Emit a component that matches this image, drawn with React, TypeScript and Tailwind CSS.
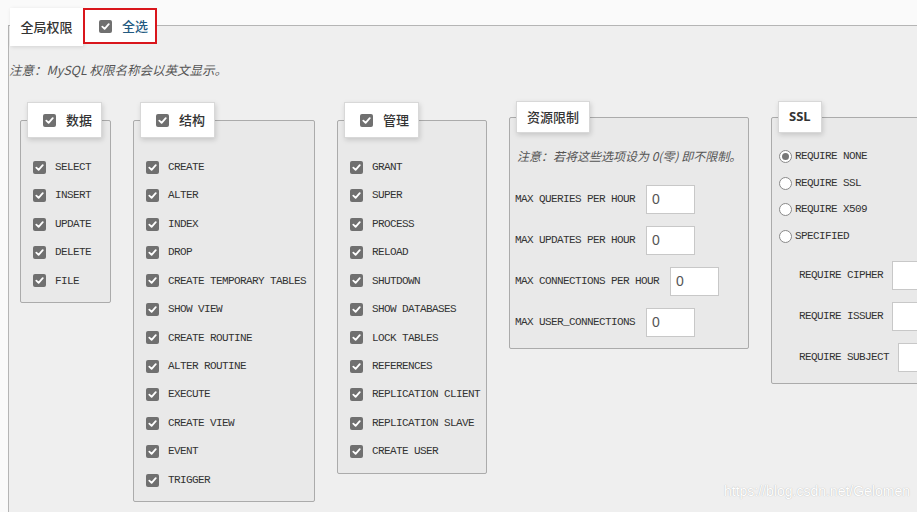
import React from 'react';

const mono = "font-['Liberation_Mono','DejaVu_Sans_Mono',monospace] text-[11px] tracking-[-0.6px] text-[#333]";
const cjk = "font-['Noto_Sans_CJK_SC','Noto_Sans',sans-serif]";

function Check() {
  return (
    <span className="inline-flex h-[13px] w-[13px] shrink-0 items-center justify-center rounded-[2px] bg-[#707070]">
      <svg width="9" height="9" viewBox="0 0 10 10" fill="none">
        <path d="M1.5 5.2 L4 7.6 L8.6 2.4" stroke="#fff" strokeWidth="2" strokeLinecap="round" strokeLinejoin="round" />
      </svg>
    </span>
  );
}

function Radio({ on = false }: { on?: boolean }) {
  return (
    <span className="inline-flex h-[13px] w-[13px] shrink-0 items-center justify-center rounded-full border border-[#8a8a8a] bg-white">
      {on && <span className="h-[7px] w-[7px] rounded-full bg-[#777]" />}
    </span>
  );
}

function Legend({ children, check = false, h = 'h-[36px]' }: { children: React.ReactNode; check?: boolean; h?: string }) {
  return (
    <legend className="ml-[6px]">
      <div className={`flex ${h} items-center bg-white border border-[#d8d8d8] shadow-[1px_2px_5px_rgba(0,0,0,0.15)] ${check ? 'pl-[15px] pr-[9px] gap-[10px]' : 'px-[10px]'}`}>
        {check && <Check />}
        {children}
      </div>
    </legend>
  );
}

function Group({ title, items, width }: { title: string; items: string[]; width: string }) {
  return (
    <fieldset className={`${width} shrink-0 rounded-[2px] border border-[#ababab] bg-[#e9e9e9] mt-[1px]`}>
      <Legend check>
        <span className={`${cjk} text-[13px] font-medium text-[#333]`}>{title}</span>
      </Legend>
      <div className="pt-[15px] pb-[7px] pl-[12px]">
        {items.map(item => (
          <div key={item} className="flex h-[28.45px] items-center gap-[9px]">
            <Check />
            <span className={mono}>{item}</span>
          </div>
        ))}
      </div>
    </fieldset>
  );
}

function NumInput({ value = '' }: { value?: string }) {
  return (
    <div className="flex h-[29px] w-[49px] shrink-0 items-center border border-[#c8c8c8] bg-white pl-[5px] font-['Liberation_Sans',sans-serif] text-[14px] text-[#555]">
      {value}
    </div>
  );
}

const dataItems = ['SELECT', 'INSERT', 'UPDATE', 'DELETE', 'FILE'];
const structItems = [
  'CREATE', 'ALTER', 'INDEX', 'DROP', 'CREATE TEMPORARY TABLES', 'SHOW VIEW',
  'CREATE ROUTINE', 'ALTER ROUTINE', 'EXECUTE', 'CREATE VIEW', 'EVENT', 'TRIGGER',
];
const adminItems = [
  'GRANT', 'SUPER', 'PROCESS', 'RELOAD', 'SHUTDOWN', 'SHOW DATABASES', 'LOCK TABLES',
  'REFERENCES', 'REPLICATION CLIENT', 'REPLICATION SLAVE', 'CREATE USER',
];
const limits = [
  'MAX QUERIES PER HOUR', 'MAX UPDATES PER HOUR', 'MAX CONNECTIONS PER HOUR', 'MAX USER_CONNECTIONS',
];
const sslOptions = ['REQUIRE NONE', 'REQUIRE SSL', 'REQUIRE X509', 'SPECIFIED'];
const sslFields = ['REQUIRE CIPHER', 'REQUIRE ISSUER', 'REQUIRE SUBJECT'];

export default function App() {
  return (
    <div className="relative h-[512px] w-[917px] overflow-hidden bg-[#fafafa]">
      <fieldset className="ml-[8px] mt-[8px] w-[1000px] h-[560px] border border-[#b5b5b5] bg-[#efefef]">
        <legend className="ml-[1px]">
          <div className="flex h-[34px] items-start">
            <div className={`flex h-[38px] w-[73px] items-center justify-center bg-white shadow-[1px_1px_4px_rgba(0,0,0,0.12)] ${cjk} text-[13px] font-medium text-[#333]`}>
              全局权限
            </div>
            <div className="flex h-[36px] w-[74px] items-center gap-[10px] border-2 border-[#d9161c] bg-white pl-[14px]">
              <Check />
              <span className={`${cjk} text-[13px] font-medium text-[#235a81]`}>全选</span>
            </div>
          </div>
        </legend>

        <div>
          <p className={`mt-[20px] ${cjk} text-[12.5px] italic text-[#555] leading-[16px]`}>
            注意：MySQL 权限名称会以英文显示。
          </p>

          <div className="mt-[23px] ml-[11px] flex items-start gap-[22px]">
            <Group title="数据" items={dataItems} width="w-[91px]" />
            <Group title="结构" items={structItems} width="w-[182px]" />
            <Group title="管理" items={adminItems} width="w-[150px]" />

            <fieldset className="w-[240px] shrink-0 rounded-[2px] border border-[#ababab] bg-[#e9e9e9]">
              <Legend h="h-[32px]">
                <span className={`${cjk} text-[13px] font-medium text-[#333]`}>资源限制</span>
              </Legend>
              <div className="pb-[11px] pl-[5px]">
                <p className={`mt-[15px] ml-[2px] ${cjk} text-[12px] italic text-[#555] leading-[16px]`}>
                  注意：若将这些选项设为 0(零) 即不限制。
                </p>
                <div className="mt-[21px] flex flex-col gap-[12px]">
                  {limits.map(l => (
                    <div key={l} className="flex items-center gap-[11px]">
                      <span className={mono}>{l}</span>
                      <NumInput value="0" />
                    </div>
                  ))}
                </div>
              </div>
            </fieldset>

            <fieldset className="w-[200px] shrink-0 rounded-[2px] border border-[#ababab] bg-[#e9e9e9]">
              <Legend h="h-[32px]">
                <span className="font-['Noto_Sans',sans-serif] text-[13px] font-bold text-[#333]">SSL</span>
              </Legend>
              <div className="pb-[11px] pl-[7px]">
                <div className="mt-[10px] flex flex-col">
                  {sslOptions.map((o, i) => (
                    <div key={o} className="flex h-[26.7px] items-center gap-[3px]">
                      <Radio on={i === 0} />
                      <span className={mono}>{o}</span>
                    </div>
                  ))}
                </div>
                <div className="mt-[11px] flex flex-col gap-[12px] pl-[20px]">
                  {sslFields.map(f => (
                    <div key={f} className="flex items-center gap-[9px]">
                      <span className={mono}>{f}</span>
                      <NumInput />
                    </div>
                  ))}
                </div>
              </div>
            </fieldset>
          </div>
        </div>
      </fieldset>

      <span className="absolute bottom-[10px] right-[7px] font-['Liberation_Sans',sans-serif] text-[14px] text-white [text-shadow:0_0_1px_rgba(0,0,0,0.3)]">
        https://blog.csdn.net/Gelomen
      </span>
    </div>
  );
}
